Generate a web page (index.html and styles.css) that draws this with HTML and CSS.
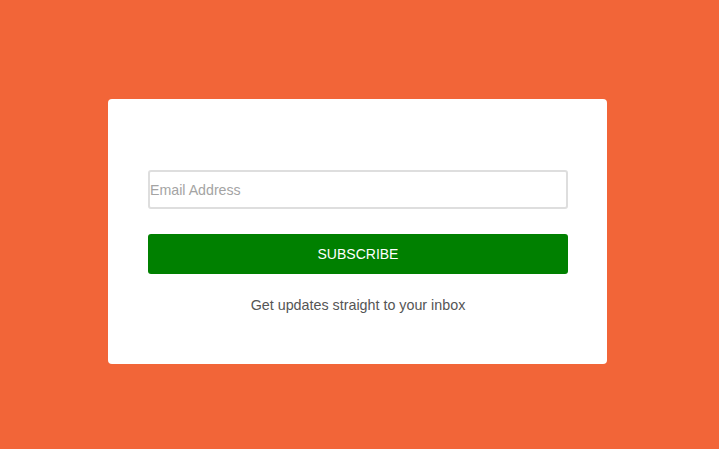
FILE: index.html
```html
<!DOCTYPE html>
<html>
<head>
<meta charset="utf-8">
<link rel="stylesheet" href="styles.css">
</head>
<body>
<div class="card">
  <input class="email" type="text" placeholder="Email Address">
  <button class="btn">SUBSCRIBE</button>
  <p class="note">Get updates straight to your inbox</p>
</div>
</body>
</html>
```
FILE: styles.css
```css
html, body {
  margin: 0;
  padding: 0;
  height: 100%;
}
body {
  background: #f26538;
  font-family: "Liberation Sans", Arial, sans-serif;
  display: flex;
  justify-content: center;
  align-items: flex-start;
  padding-top: 99px;
  box-sizing: border-box;
}
.card {
  width: 499px;
  height: 265px;
  box-sizing: border-box;
  margin-right: 4px;
  background: #fff;
  border-radius: 4px;
  padding: 71px 39px 0 40px;
  display: flex;
  flex-direction: column;
}
.email {
  height: 39px;
  box-sizing: border-box;
  border: 2px solid #dedede;
  border-radius: 3px;
  padding: 0 1px 0 0;
  font-family: "Liberation Sans", Arial, sans-serif;
  font-size: 14.2px;
  color: #333;
  outline: none;
}
.email::placeholder {
  color: #a4a4a4;
}
.btn {
  margin-top: 25px;
  height: 40px;
  border: none;
  border-radius: 3px;
  background: #008000;
  color: #fff;
  font-family: "Liberation Sans", Arial, sans-serif;
  font-size: 14px;
  padding: 0;
}
.note {
  margin: 23px 0 0;
  text-align: center;
  font-size: 14.3px;
  line-height: 16px;
  color: #555;
}
```
